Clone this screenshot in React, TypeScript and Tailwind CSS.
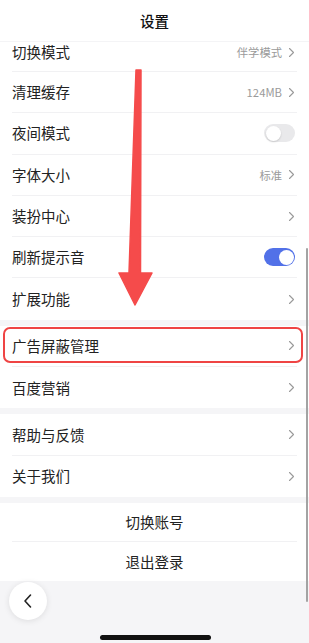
import React from 'react';

const font = { fontFamily: '"Noto Sans CJK SC", "Noto Sans", sans-serif' };

function Chevron() {
  return (
    <svg width="7" height="11" viewBox="0 0 7 11" className="shrink-0">
      <path d="M1.5 1.5 L5.5 5.5 L1.5 9.5" fill="none" stroke="#9a9a9a" strokeWidth="1.1" strokeLinecap="round" strokeLinejoin="round" />
    </svg>
  );
}

function Toggle({ on }: { on: boolean }) {
  return on ? (
    <div className="w-[31px] h-[18px] rounded-full bg-[#5271e8] flex items-center justify-end pr-[1.5px]">
      <div className="w-[15px] h-[15px] rounded-full bg-white" />
    </div>
  ) : (
    <div className="w-[31px] h-[18px] rounded-full bg-[#e9e9eb] flex items-center pl-[1.5px]">
      <div className="w-[15px] h-[15px] rounded-full bg-white shadow-[0_1px_2px_rgba(0,0,0,0.15)]" />
    </div>
  );
}

interface RowProps {
  label: string;
  value?: string;
  toggle?: boolean;
  last?: boolean;
  first?: boolean;
}

function Row({ label, value, toggle, last, first }: RowProps) {
  return (
    <div className={`bg-white px-3 ${first ? 'h-[30px]' : 'h-[41.3px]'}`}>
      <div
        className={`h-full flex justify-between pr-[2px] ${first ? 'items-start pt-[1px]' : 'items-center'} ${
          last ? '' : 'border-b border-[#f1f1f3]'
        }`}
      >
        <span className="text-[14.5px] leading-[18px] text-[#222]">{label}</span>
        {toggle !== undefined ? (
          <Toggle on={toggle} />
        ) : (
          <div className={`flex items-center gap-[6px] ${first ? 'h-[18px]' : ''}`}>
            {value && <span className="text-[11.3px] leading-[14px] text-[#9a9a9a]">{value}</span>}
            <Chevron />
          </div>
        )}
      </div>
    </div>
  );
}

export default function App() {
  return (
    <div className="relative w-[309px] h-[643px] overflow-hidden bg-[#f5f5f7]" style={font}>
      {/* Header */}
      <div className="h-[42px] bg-white flex items-center justify-center border-b border-[#f4f4f6]">
        <span className="text-[14.5px] font-medium text-[#111]">设置</span>
      </div>

      <div className="flex flex-col">
        {/* first row is partly scrolled under the header */}
        <Row label="切换模式" value="伴学模式" first />
        <Row label="清理缓存" value="124MB" />
        <Row label="夜间模式" toggle={false} />
        <Row label="字体大小" value="标准" />
        <Row label="装扮中心" />
        <Row label="刷新提示音" toggle={true} />
        <Row label="扩展功能" last />

        <div className="h-[6px]" />
        <Row label="广告屏蔽管理" />
        <Row label="百度营销" last />

        <div className="h-[6px]" />
        <Row label="帮助与反馈" />
        <Row label="关于我们" last />

        <div className="h-[6.5px]" />
        <div className="bg-white px-3">
          <div className="h-[38.5px] flex items-center justify-center border-b border-[#f1f1f3]">
            <span className="text-[14.5px] text-[#222]">切换账号</span>
          </div>
          <div className="h-[39px] flex items-center justify-center">
            <span className="text-[14.5px] text-[#222]">退出登录</span>
          </div>
        </div>
      </div>

      {/* Highlight box */}
      <div className="absolute left-[3px] top-[327px] w-[300px] h-[36px] rounded-[7px] border-[2.5px] border-[#ef4444]" />

      {/* Arrow annotation */}
      <svg className="absolute left-0 top-0" width="309" height="643" viewBox="0 0 309 643">
        <polygon
          points="136,70 141,70 140.5,273 152,273 135,305 119,273 129,273"
          fill="#f54b4b"
          stroke="#f54b4b"
          strokeWidth="1.5"
          strokeLinejoin="round"
        />
      </svg>

      {/* Scrollbar */}
      <div className="absolute right-[1px] top-[248px] w-[2.5px] h-[354px] rounded-full bg-[#a3a3a3]" />

      {/* Back button */}
      <div className="absolute left-[9px] top-[582px] w-[38px] h-[38px] rounded-full bg-white shadow-[0_1px_6px_rgba(0,0,0,0.1)] flex items-center justify-center">
        <svg width="12" height="16" viewBox="0 0 12 16">
          <path d="M8.5 2 L3 8 L8.5 14" fill="none" stroke="#222" strokeWidth="1.6" strokeLinecap="round" strokeLinejoin="round" />
        </svg>
      </div>

      {/* Home indicator */}
      <div className="absolute left-[100px] top-[635px] w-[111px] h-[5px] rounded-full bg-[#111]" />
    </div>
  );
}
